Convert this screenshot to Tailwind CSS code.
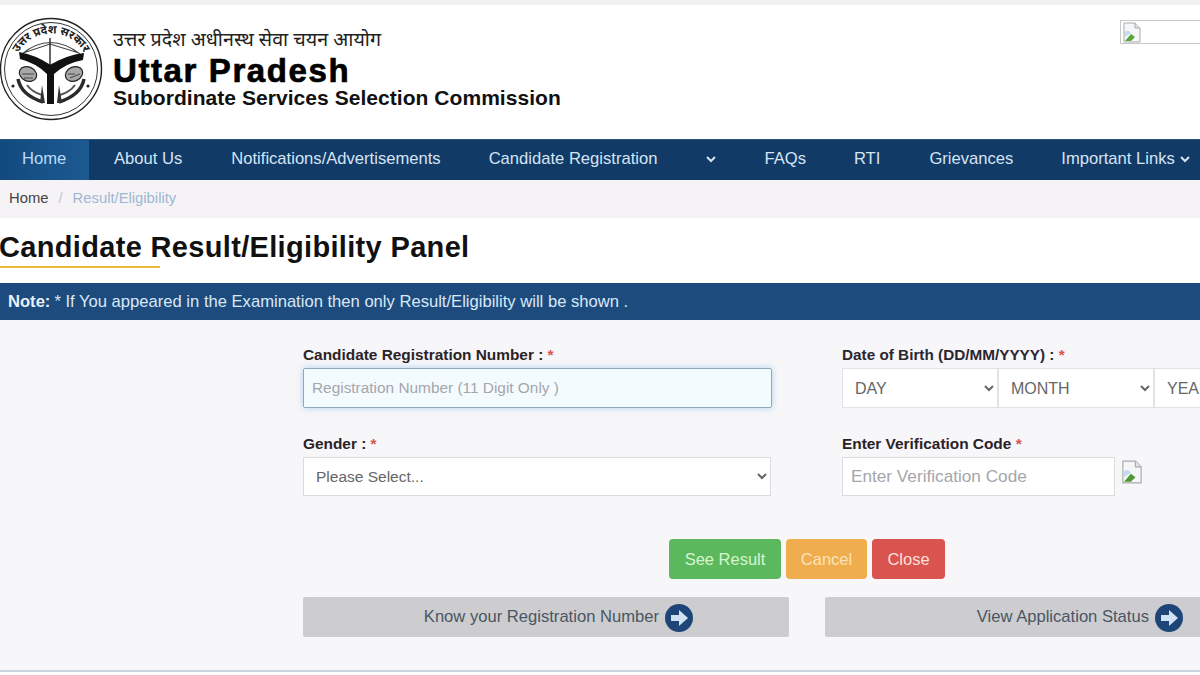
<!DOCTYPE html>
<html lang="en">

<head>
    <meta charset="UTF-8">
    <meta name="viewport" content="width=device-width, initial-scale=1.0">
    <title>Candidate Result/Eligibility Panel</title>
    <script src="https://cdn.jsdelivr.net/npm/@tailwindcss/browser@4"></script>
</head>

<body class="w-[1200px] h-[675px] overflow-hidden bg-white font-['Liberation_Sans',Arial,sans-serif]">
    <!-- top strip -->
    <div class="h-[5px] bg-[#f1f1f1]"></div>

    <!-- header -->
    <header class="h-[134px] bg-white flex items-start">
        <svg class="w-[104px] h-[106px] mt-[12px] shrink-0" viewBox="0 0 104 106">
            <defs>
                <path id="ring" d="M 14 60 A 37.500 37.500 0 1 1 88 60"></path>
            </defs>
            <circle cx="51" cy="52" r="50.5" fill="none" stroke="#222" stroke-width="1.4"></circle>
            <circle cx="51" cy="52" r="46.5" fill="none" stroke="#333" stroke-width="1"></circle>
            <text font-size="11.500" font-weight="700" fill="#222" text-anchor="middle" font-family="'Noto Sans','Noto Sans Devanagari',sans-serif"><textPath href="#ring" startOffset="50%">उत्तर प्रदेश सरकार</textPath></text>
            <!-- bow and arrow -->
            <path d="M22 37 Q50 14 80 37 M22 37 L50 48 L80 37 M23 36 L50 27 L79 36" fill="none" stroke="#444" stroke-width="1.1"></path>
            <path d="M50 21 L50 50" fill="none" stroke="#333" stroke-width="1.5"></path>
            <path d="M19 35 Q36 38 50.500 48 Q66 38 84 36 L83 43 Q66 46 54 57 L54 87 L47 87 L47 57 Q36 46 20 42 Z" fill="#111"></path>
            <!-- fishes -->
            <ellipse cx="28" cy="57" rx="9" ry="7" transform="rotate(25 28 57)" fill="#a8a8a8" stroke="#222" stroke-width="1.2"></ellipse>
            <ellipse cx="74" cy="57" rx="9" ry="7" transform="rotate(-25 74 57)" fill="#a8a8a8" stroke="#222" stroke-width="1.2"></ellipse>
            <path d="M22 57 L34 57 M24 61 L33 61 M75 57 L68 57 M80 57 L70 61" fill="none" stroke="#444" stroke-width="1"></path>
            <!-- waves -->
            <path d="M18 62 Q21 78 43 85" fill="none" stroke="#2a2a2a" stroke-width="3.500"></path>
            <path d="M84 62 Q81 78 59 85" fill="none" stroke="#2a2a2a" stroke-width="3.500"></path>
            <path d="M27 68 Q32 75 42 78 M75 68 Q70 75 60 78" fill="none" stroke="#555" stroke-width="2"></path>
            <path d="M42 68 L45 86 L40 86 Z M59 68 L62 86 L57 86 Z" fill="#333"></path>
            <circle cx="13" cy="69" r="1.6" fill="#222"></circle>
            <circle cx="88" cy="69" r="1.6" fill="#222"></circle>
        </svg>
        <div class="ml-[9px] mt-[21px] text-black">
            <div class="text-[19.700px] leading-[26px] text-[#222] font-['Noto_Sans','Noto_Sans_Devanagari',sans-serif]">उत्तर प्रदेश अधीनस्थ सेवा चयन आयोग</div>
            <div class="text-[33px] leading-[34px] mt-[2px] font-bold tracking-[1.6px] [-webkit-text-stroke:0.7px_#000]">Uttar Pradesh</div>
            <div class="text-[21px] leading-[24px] -mt-[2px] font-bold text-[#111] tracking-[0.05px]">Subordinate Services Selection Commission</div>
        </div>
        <!-- broken banner image -->
        <div class="ml-auto mt-[15px] w-[80px] h-[24px] border border-[#c8c8c8] border-r-0 bg-white flex items-center pl-[1px]">
            <svg class="w-[20px] h-[21px]" viewBox="0 0 20 21">
                <path d="M2 1 H13 L18 6 V20 H2 Z" fill="#f4f6f8" stroke="#a9a9a9"></path>
                <path d="M13 1 V6 H18" fill="#dfe4ea" stroke="#a9a9a9"></path>
                <path d="M3 19 L9 12 L13 15 L9 19 Z" fill="#5aa63c"></path>
                <path d="M3 10 Q6 7 9 11 L3 15 Z" fill="#c6d9f0"></path>
            </svg>
        </div>
    </header>

    <!-- main nav -->
    <nav class="h-[41px] flex items-center bg-[#123a66] border-t border-[#2a5580] text-[16.600px] text-[#d5e4f5] whitespace-nowrap">
        <a class="h-full w-[89px] flex items-center pl-[22px] pb-[2px] text-[#bcdcfb] bg-gradient-to-r from-[#124a7e] to-[#1d5a92]">Home</a>
        <a class="pl-[25px] pr-[24px] mb-[2px]">About Us</a>
        <a class="pl-[25px] pr-[24px] mb-[2px]">Notifications/Advertisements</a>
        <a class="px-[24px] mb-[2px]">Candidate Registration</a>
        <span class="w-[59px] flex justify-center mb-[2px]">
            <svg class="w-[12px] h-[12px]" viewBox="0 0 12 12"><path d="M2 4 L6 8 L10 4" fill="none" stroke="#d5e4f5" stroke-width="2"></path></svg>
        </span>
        <a class="px-[24px] mb-[2px]">FAQs</a>
        <a class="px-[24px] mb-[2px]">RTI</a>
        <a class="pl-[25px] pr-[24px] mb-[2px]">Grievances</a>
        <a class="pl-[24px] pr-[4px] mb-[2px]">Important Links</a>
        <svg class="w-[12px] h-[12px] mb-[2px]" viewBox="0 0 12 12"><path d="M2 4 L6 8 L10 4" fill="none" stroke="#d5e4f5" stroke-width="2"></path></svg>
    </nav>

    <!-- breadcrumb -->
    <div class="h-[38px] bg-[#f5f3f6] flex items-center pl-[9px] pb-[2px] text-[14.800px]">
        <span class="text-[#444]">Home</span>
        <span class="mx-[10px] text-[#c4c4c8]">/</span>
        <span class="text-[#9db7d3]">Result/Eligibility</span>
    </div>

    <!-- title -->
    <div class="h-[65px] bg-white pt-[12px]">
        <h1 class="text-[29px] leading-[34px] font-bold text-[#111] tracking-[0.33px] -ml-[1px]">Candidate Result/Eligibility Panel</h1>
        <div class="w-[160px] h-[2px] mt-[2px] bg-[#e9b93c]"></div>
    </div>

    <!-- note -->
    <div class="h-[37px] bg-[#1d4b7d] flex items-center pl-[8px] pt-[1px] text-[16.600px] text-[#d9e8f7]">
        <b class="text-[#e8f0f8] mr-[4px]">Note:</b>
        <span>* If You appeared in the Examination then only Result/Eligibility will be shown .</span>
    </div>

    <!-- form panel -->
    <main class="h-[352px] overflow-hidden bg-[#f7f6f9] border-b-2 border-[#c9d4df]">
        <div class="pl-[303px] pt-[26px] grid grid-cols-[468px_358px] gap-x-[71px] gap-y-[27px] w-[1200px]">
            <div>
                <label class="block text-[15.400px] leading-[18px] font-bold text-[#2b2226]">Candidate Registration Number : <span class="text-[#d9534f]">*</span></label>
                <input type="text" placeholder="Registration Number (11 Digit Only )" class="mt-[4px] block w-[469px] h-[40px] px-[8px] text-[15.400px] bg-[#f4fbfe] border border-[#8fa9bf] rounded-[2px] shadow-[0_0_6px_rgba(102,175,233,0.5)] placeholder:text-[#a4a6ac]">
            </div>
            <div>
                <label class="block text-[15.300px] leading-[18px] font-bold text-[#2b2630]">Date of Birth (DD/MM/YYYY) : <span class="text-[#d9534f]">*</span></label>
                <div class="mt-[4px] flex w-[400px]">
                    <select class="w-[156px] h-[40px] pl-[8px] text-[16px] text-[#666] bg-white border border-[#e3e1e5]"><option>DAY</option></select>
                    <select class="w-[156px] h-[40px] pl-[8px] text-[16px] text-[#666] bg-white border border-[#e3e1e5]"><option>MONTH</option></select>
                    <select class="w-[88px] h-[40px] pl-[8px] text-[16px] text-[#666] bg-white border border-[#e3e1e5]"><option>YEAR</option></select>
                </div>
            </div>
            <div>
                <label class="block text-[15.400px] leading-[18px] font-bold text-[#2b2226]">Gender : <span class="text-[#d9534f]">*</span></label>
                <select class="mt-[4px] block w-[468px] h-[39px] pl-[8px] text-[15.500px] text-[#666] bg-white border border-[#dcdbe0]"><option>Please Select...</option></select>
            </div>
            <div>
                <label class="block text-[15.400px] leading-[18px] font-bold text-[#2b2226]">Enter Verification Code <span class="text-[#d9534f]">*</span></label>
                <div class="mt-[4px] flex items-start">
                    <input type="text" placeholder="Enter Verification Code" class="w-[273px] h-[39px] px-[8px] text-[17.200px] bg-white border border-[#dcdbe0] placeholder:text-[#a4a6ac]">
                    <svg class="w-[24px] h-[24px] ml-[5px] mt-[3px]" viewBox="0 0 20 21">
                        <path d="M2 1 H13 L18 6 V20 H2 Z" fill="#f4f6f8" stroke="#a9a9a9"></path>
                        <path d="M13 1 V6 H18" fill="#dfe4ea" stroke="#a9a9a9"></path>
                        <path d="M3 19 L9 12 L13 15 L9 19 Z" fill="#4f9a34"></path>
                        <path d="M3 10 Q6 7 9 11 L3 15 Z" fill="#c6d9f0"></path>
                    </svg>
                </div>
            </div>
        </div>

        <!-- buttons -->
        <div class="mt-[43px] pl-[669px] flex gap-[5px] text-[16.500px]">
            <button class="w-[112px] h-[40px] rounded-[4px] bg-[#5cb85c] text-[#d8f5d0]">See Result</button>
            <button class="w-[81px] h-[40px] rounded-[4px] bg-[#f0ad4e] text-[#fbe3bd]">Cancel</button>
            <button class="w-[73px] h-[40px] rounded-[4px] bg-[#d9534f] text-[#fde0d8]">Close</button>
        </div>

        <!-- secondary links -->
        <div class="mt-[18px] pl-[303px] flex gap-[36px] w-[1240px] text-[16.600px] text-[#4a5663]">
            <a class="w-[486px] h-[40px] pt-[1px] rounded-[2px] bg-[#cdcdcf] flex items-center justify-end pr-[96px] gap-[6px] shrink-0">Know your Registration Number
                <svg class="w-[28px] h-[28px] shrink-0" viewBox="0 0 28 28"><circle cx="14" cy="14" r="14" fill="#1d4577"></circle><path d="M6 11 H14 V6 L23 14 L14 22 V17 H6 Z" fill="#cfe1f3"></path></svg>
            </a>
            <a class="w-[375px] h-[40px] pt-[1px] rounded-l-[2px] bg-[#cdcdd1] flex items-center justify-end pr-[17px] gap-[6px] shrink-0">View Application Status
                <svg class="w-[28px] h-[28px] shrink-0" viewBox="0 0 28 28"><circle cx="14" cy="14" r="14" fill="#1d4577"></circle><path d="M6 11 H14 V6 L23 14 L14 22 V17 H6 Z" fill="#cfe1f3"></path></svg>
            </a>
        </div>
    </main>
</body>

</html>
